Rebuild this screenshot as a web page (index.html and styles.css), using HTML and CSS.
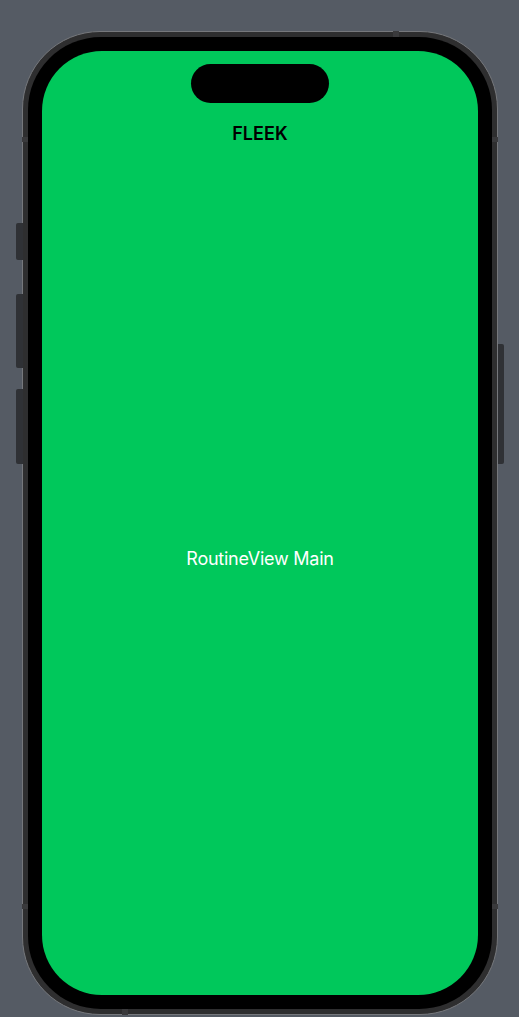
FILE: index.html
```html
<!DOCTYPE html>
<html lang="en">
<head>
<meta charset="utf-8">
<title>FLEEK</title>
<link rel="stylesheet" href="styles.css">
</head>
<body>
<div class="stage">
  <div class="phone">
    <span class="btn btn-action"></span>
    <span class="btn btn-vol-up"></span>
    <span class="btn btn-vol-down"></span>
    <span class="btn btn-power"></span>
    <span class="band band-top"></span>
    <span class="band band-bottom"></span>
    <span class="band band-left-top"></span>
    <span class="band band-right-top"></span>
    <span class="band band-left-bottom"></span>
    <span class="band band-right-bottom"></span>
    <div class="bezel">
      <div class="screen">
        <div class="island"></div>
        <div class="title">FLEEK</div>
        <div class="main">
          <p class="main-text">RoutineView Main</p>
        </div>
      </div>
    </div>
  </div>
</div>
</body>
</html>
```

FILE: styles.css
```css
* { box-sizing: border-box; }

html, body {
  margin: 0;
  padding: 0;
  background: #555b64;
}

body {
  width: 519px;
  height: 1017px;
  overflow: hidden;
  font-family: Inter, "Liberation Sans", sans-serif;
}

.stage {
  padding: 31px 0 0 22px;
}

.phone {
  position: relative;
  width: 476px;
  height: 984px;
  border-radius: 78px;
  border: 1px solid #76787c;
  background: #2e2e2f;
  padding: 5px;
}

.bezel {
  width: 100%;
  height: 100%;
  border-radius: 73px;
  background: #000;
  padding: 14px;
}

.screen {
  height: 100%;
  border-radius: 60px;
  background: #00c85b;
  display: flex;
  flex-direction: column;
  align-items: center;
  padding: 13px 0 22px;
}

.island {
  width: 138px;
  height: 39px;
  border-radius: 20px;
  background: #000;
  flex: none;
}

.title {
  margin-top: 20px;
  font-size: 18px;
  line-height: 22px;
  font-weight: 600;
  color: #000;
  letter-spacing: 0.1px;
}

.main {
  flex: 1;
  display: flex;
  align-items: center;
  justify-content: center;
}

.main-text {
  margin: 0;
  font-size: 18px;
  line-height: 22px;
  font-weight: 400;
  color: #fff;
  letter-spacing: -0.25px;
}

/* hardware buttons (sit outside the frame edge) */
.btn {
  position: absolute;
  background: #2f3135;
  width: 7px;
}
.btn-action { left: -7px; top: 191px; height: 37px; border-radius: 2px 0 0 2px; }
.btn-vol-up { left: -7px; top: 262px; height: 74px; border-radius: 2px 0 0 2px; }
.btn-vol-down { left: -7px; top: 357px; height: 75px; border-radius: 2px 0 0 2px; }
.btn-power { right: -7px; top: 312px; height: 120px; width: 6px; border-radius: 0 2px 2px 0; }

/* antenna bands on the frame */
.band {
  position: absolute;
  background: #3a3a3c;
}
.band-top { top: -1px; left: 370px; width: 6px; height: 6px; }
.band-bottom { bottom: -1px; left: 99px; width: 6px; height: 6px; }
.band-left-top { left: -1px; top: 105px; width: 6px; height: 5px; }
.band-right-top { right: -1px; top: 105px; width: 6px; height: 5px; }
.band-left-bottom { left: -1px; bottom: 105px; width: 6px; height: 5px; }
.band-right-bottom { right: -1px; bottom: 105px; width: 6px; height: 5px; }
```
